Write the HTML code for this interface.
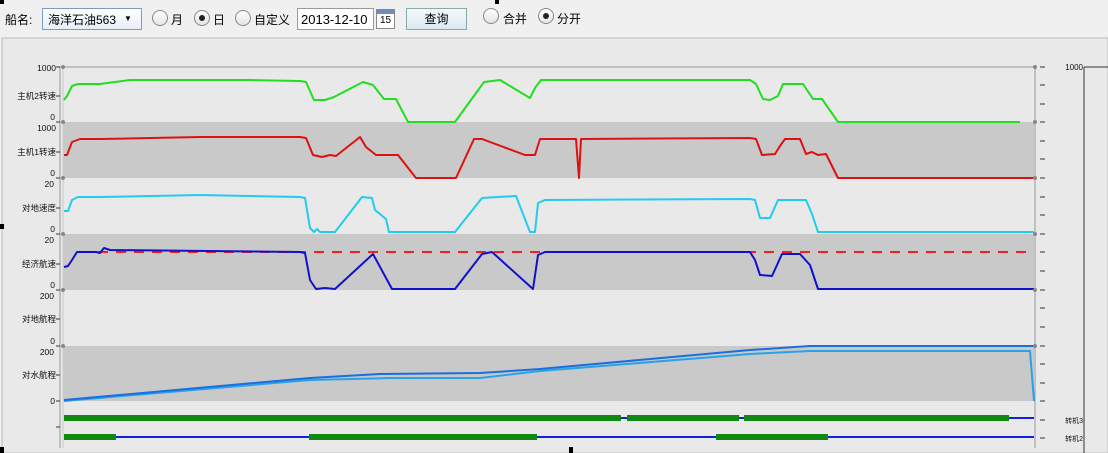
<!DOCTYPE html>
<html><head><meta charset="utf-8"><style>
body{margin:0;width:1108px;height:453px;overflow:hidden;background:#f0f0f0;font-family:"Liberation Sans","Noto Sans CJK SC",sans-serif;font-size:12px;position:relative}
.a{position:absolute}
.radio{position:absolute;width:14px;height:14px;border:1px solid #888;border-radius:50%;background:linear-gradient(#fff,#e4e4e4)}
.radio.on::after{content:"";position:absolute;left:4px;top:4px;width:6px;height:6px;border-radius:50%;background:#222}
</style></head><body>
<div class="a" style="left:0;top:0;width:4px;height:4px;background:#000"></div>
<div class="a" style="left:495px;top:0;width:4px;height:4px;background:#000"></div>
<div class="a" style="left:5px;top:11px">船名:</div>
<div class="a" style="left:42px;top:8px;width:98px;height:20px;border:1px solid #7a9cc0;background:linear-gradient(#fff,#e6eef8)"></div>
<div class="a" style="left:48px;top:11px">海洋石油563</div>
<div class="a" style="left:124px;top:14px;font-size:8px">▼</div>
<div class="radio" style="left:152px;top:10px"></div><div class="a" style="left:171px;top:11px">月</div>
<div class="radio on" style="left:194px;top:10px"></div><div class="a" style="left:213px;top:11px">日</div>
<div class="radio" style="left:235px;top:10px"></div><div class="a" style="left:254px;top:11px">自定义</div>
<div class="a" style="left:297px;top:8px;width:75px;height:20px;border:1px solid #999;background:#fff"></div>
<div class="a" style="left:301px;top:12px;font-size:13px">2013-12-10</div>
<div class="a" style="left:376px;top:9px;width:17px;height:18px;border:1px solid #888;background:#fff;font-size:10px;text-align:center;line-height:22px"><div style="position:absolute;left:0;top:0;width:17px;height:4px;background:#6a8fb8"></div>15</div>
<div class="a" style="left:406px;top:8px;width:59px;height:20px;border:1px solid #8aa;background:linear-gradient(#f4f8fc,#dde8f2);text-align:center;line-height:20px">查询</div>
<div class="radio" style="left:483px;top:8px"></div><div class="a" style="left:503px;top:10px">合并</div>
<div class="radio on" style="left:538px;top:8px"></div><div class="a" style="left:557px;top:10px">分开</div>
<svg class="a" style="left:0;top:0" width="1108" height="453" font-family="Liberation Sans,Noto Sans CJK SC,sans-serif" font-size="8.5">
<rect x="2" y="38" width="1106" height="415" fill="#e9e9e9" stroke="#bbb"/>
<rect x="0" y="224" width="4" height="5" fill="#000"/><rect x="0" y="447" width="4" height="6" fill="#000"/><rect x="569" y="447" width="4" height="6" fill="#000"/>
<rect x="63" y="122" width="971" height="56" fill="#c9c9c9"/>
<rect x="63" y="234" width="971" height="56" fill="#c9c9c9"/>
<rect x="63" y="346" width="971" height="55" fill="#c9c9c9"/>
<line x1="63" y1="67" x2="1034" y2="67" stroke="#999"/>
<line x1="60" y1="66" x2="60" y2="448" stroke="#999"/>
<line x1="63" y1="66" x2="63" y2="448" stroke="#ccc"/>
<line x1="1035" y1="66" x2="1035" y2="448" stroke="#999"/>
<g stroke="#333">
<path d="M1040 67h5M1040 85h5M1040 104h5M1040 122h5M1040 141h5M1040 159h5M1040 178h5M1040 197h5M1040 215h5M1040 234h5M1040 252h5M1040 271h5M1040 290h5M1040 308h5M1040 327h5M1040 346h5M1040 364h5M1040 383h5M1040 401h5M1040 420h5M1040 438h5"/>
<path d="M56 67h4M56 96h4M56 122h4M56 152h4M56 178h4M56 208h4M56 234h4M56 264h4M56 290h4M56 319h4M56 346h4M56 375h4M56 401h4M56 427h4"/>
<path d="M1084 67v386M1084 67h24"/>
</g>
<g text-anchor="end" fill="#111">
<text x="56" y="71">1000</text><text x="56" y="99">主机2转速</text><text x="55" y="120">0</text>
<text x="56" y="131">1000</text><text x="56" y="155">主机1转速</text><text x="55" y="176">0</text>
<text x="54" y="187">20</text><text x="56" y="211">对地速度</text><text x="55" y="232">0</text>
<text x="54" y="243">20</text><text x="56" y="267">经济航速</text><text x="55" y="288">0</text>
<text x="54" y="299">200</text><text x="56" y="322">对地航程</text><text x="55" y="344">0</text>
<text x="54" y="355">200</text><text x="56" y="378">对水航程</text><text x="55" y="404">0</text>
<text x="1083" y="70" font-size="8">1000</text>
<text x="1083" y="423" font-size="7">转机3</text><text x="1083" y="441" font-size="7">转机2</text>
</g>
<g fill="none" stroke-width="2" stroke-linejoin="round">
<polyline stroke="#22dd22" points="64,100 67,96 72,86 78,84 100,84 130,80 250,80 300,81 306,82 314,100 325,100 334,97 363,82 373,85 384,99 396,99 408,122 455,122 484,82 500,80 530,98 535,88 541,80 750,80 756,84 763,99 770,100 778,96 783,84 803,84 813,99 822,99 838,122 1020,122"/>
<polyline stroke="#dd1111" points="64,155 67,155 72,142 80,139 100,139 200,137 300,137 306,138 313,155 322,157 330,155 336,156 360,137 366,147 376,155 398,155 416,178 456,178 474,139 482,139 525,155 535,155 540,139 576,139 579,178 581,139 750,138 756,139 762,155 775,154 780,146 785,139 800,139 806,154 812,152 818,155 826,154 838,178 1034,178"/>
<polyline stroke="#22ccee" points="64,211 68,211 72,200 78,197 100,197 200,195 300,197 305,198 310,228 314,232 317,229 320,232 335,232 362,197 372,198 375,210 386,219 389,232 455,232 482,198 498,197 516,196 530,232 535,232 538,203 545,200 750,199 755,200 760,218 770,218 778,200 800,200 806,200 812,214 818,232 822,232 1034,232"/>
<line x1="80" y1="252" x2="1034" y2="252" stroke="#ee2222" stroke-dasharray="10,8"/>
<polyline stroke="#1111cc" points="64,267 68,266 72,260 77,252 96,252 100,253 104,248 110,250 300,252 305,253 310,280 316,289 325,288 335,289 373,254 392,289 455,289 482,254 492,252 533,289 538,255 545,252 750,252 755,260 760,275 772,276 782,254 800,254 810,265 818,289 1034,289"/>
<polyline stroke="#29a3e8" points="64,401 310,380 390,378 480,378 540,371 750,354 810,351 1030,351 1034,401"/>
<polyline stroke="#1a6ee0" points="64,400 310,378 380,374 480,373 540,369 750,350 810,346 1034,346"/>
<line x1="64" y1="418" x2="1034" y2="418" stroke="#1122dd"/>
<line x1="64" y1="437" x2="1034" y2="437" stroke="#1122dd"/>
<path stroke="#118811" stroke-width="6" d="M64 418H621M627 418H739M744 418H1009M64 437H116M309 437H537M716 437H828"/>
</g>
<g fill="#888"><circle cx="63" cy="67" r="2"/><circle cx="63" cy="122" r="2"/><circle cx="63" cy="178" r="2"/><circle cx="63" cy="234" r="2"/><circle cx="63" cy="290" r="2"/><circle cx="63" cy="346" r="2"/>
<circle cx="1035" cy="67" r="2"/><circle cx="1035" cy="122" r="2"/><circle cx="1035" cy="178" r="2"/><circle cx="1035" cy="234" r="2"/><circle cx="1035" cy="290" r="2"/><circle cx="1035" cy="346" r="2"/></g>
</svg>
</body></html>
